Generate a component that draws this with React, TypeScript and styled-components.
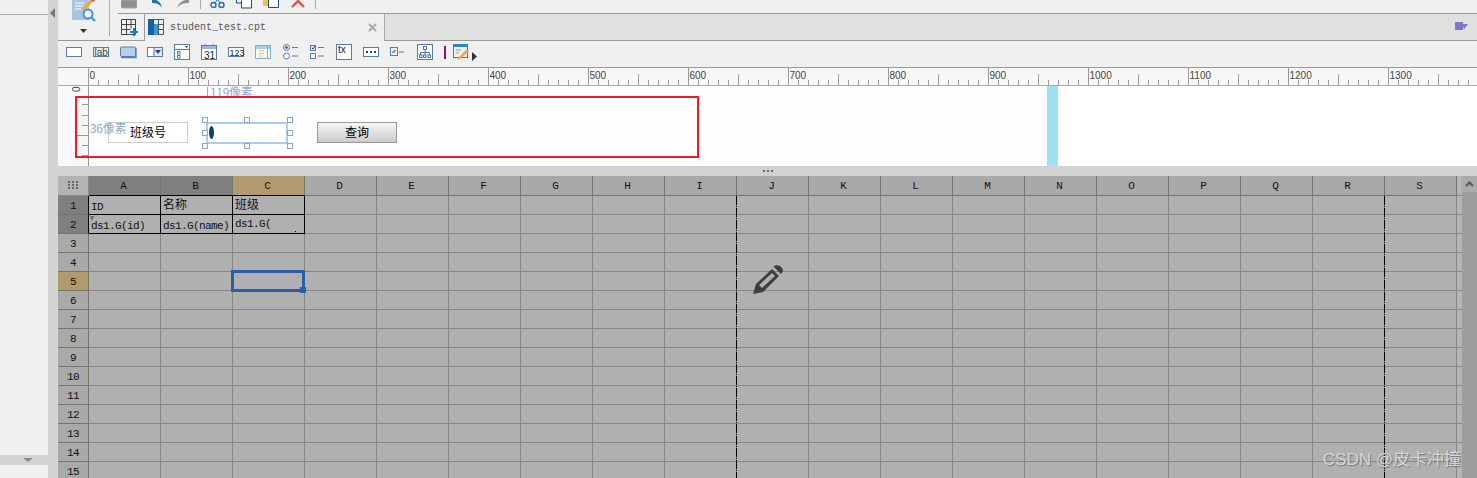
import React from "react";
import styled, { createGlobalStyle } from "styled-components";

const Global = createGlobalStyle`
  html, body { margin: 0; padding: 0; background: #f0f0f0; overflow: hidden; }
  * { box-sizing: border-box; }
  svg { display: block; }
`;

const MONO = `"Liberation Mono", "Noto Sans CJK SC", monospace`;
const CJK = `"Noto Sans CJK SC", "Liberation Sans", sans-serif`;
const ICON = "#5b7bab";

const Page = styled.div`
  position: relative;
  display: flex;
  width: 1477px;
  height: 478px;
  overflow: hidden;
  background: #f0f0f0;
`;

const Sidebar = styled.aside`
  width: 48px;
  display: flex;
  flex-direction: column;
  background: #f0f0f0;
`;
const SidebarHead = styled.div`
  height: 15px;
  border-bottom: 1px solid #aaa;
`;
const SidebarBody = styled.div`
  flex: 1;
`;
const SidebarBand = styled.div`
  height: 10px;
  margin-bottom: 13px;
  background: #d4d4d4;
  display: flex;
  align-items: center;
  justify-content: center;
  padding-left: 8px;
`;
const Collapse = styled.div`
  width: 10px;
  background: #d4d4d4;
  padding: 8px 0 0 2px;
`;
const Main = styled.main`
  flex: 1;
  min-width: 0;
  display: flex;
  flex-direction: column;
`;

const TopBlock = styled.div`
  display: flex;
  height: 41px;
`;
const LargeTool = styled.div`
  width: 60px;
  height: 41px;
  padding: 0 0 0 14px;
  border-bottom: 1px solid #999;
  position: relative;
  display: flex;
  flex-direction: column;
  gap: 6px;
`;
const LargeArrow = styled.div`
  margin-left: 8px;
`;
const LargeDivider = styled.div`
  position: absolute;
  left: 51px;
  top: 0;
  height: 36px;
  width: 1px;
  background: #aaa;
`;
const TopRight = styled.div`
  flex: 1;
  display: flex;
  flex-direction: column;
`;
const QuickBar = styled.div`
  height: 14px;
  border-bottom: 1px solid #999;
  display: flex;
  align-items: flex-start;
  padding-left: 3px;
`;
const QuickSlot = styled.div<{ $w: number }>`
  width: ${(p) => p.$w}px;
  height: 9px;
  overflow: hidden;
`;
const QuickDivider = styled.div<{ $after: number }>`
  width: 1px;
  height: 9px;
  background: #aaa;
  margin-right: ${(p) => p.$after}px;
`;
const TabRow = styled.div`
  display: flex;
  height: 27px;
`;
const NewSheet = styled.div`
  width: 27px;
  border-right: 1px solid #999;
  border-bottom: 1px solid #999;
  padding: 5px 0 0 3px;
`;
const Tab = styled.div`
  width: 240px;
  border-right: 1px solid #aaa;
  display: flex;
  align-items: center;
  padding: 0 7px 1px 3px;
  gap: 6px;
  background: #efefef;
`;
const TabName = styled.span`
  flex: 1;
  font: 10px ${MONO};
  color: #555;
`;
const TabFiller = styled.div`
  flex: 1;
  background: #e0e0e0;
  border-bottom: 1px solid #999;
  display: flex;
  align-items: center;
  justify-content: flex-end;
  padding: 0 9px 1px 0;
`;

const WidgetBar = styled.div`
  height: 27px;
  border-bottom: 1px solid #999;
  display: flex;
  padding: 2px 0 0 3px;
`;
const WidgetSlot = styled.div`
  width: 27px;
  height: 18px;
  display: flex;
  justify-content: center;
`;
const BarRule = styled.div`
  width: 2px;
  height: 13px;
  margin: 3px 7px 0 5px;
  background: #7a1a6e;
`;
const EditSlot = styled.div`
  display: flex;
  align-items: flex-start;
  gap: 3px;
`;
const EditArrow = styled.div`
  margin-top: 9px;
`;

const RulerRow = styled.div`
  height: 18px;
  background: #f7f7f7;
  border-bottom: 1px solid #aaa;
`;

const CanvasPane = styled.div`
  position: relative;
  height: 80px;
  display: flex;
`;
const Gutter = styled.div`
  width: 31px;
  background: #f9f9f9;
  border-right: 1px solid #999;
`;
const FormArea = styled.div`
  width: 958px;
  position: relative;
  background: #fdfdff;
`;
const BlueBar = styled.div`
  width: 11px;
  background: #9fe0f2;
`;
const CanvasRest = styled.div`
  flex: 1;
  background: #fff;
`;
const RedFrame = styled.div`
  position: absolute;
  left: 17px;
  top: 10px;
  width: 624px;
  height: 62px;
  border: 2px solid #ed1c24;
  pointer-events: none;
`;
const Measure = styled.span<{ $x: number; $y: number }>`
  position: absolute;
  left: ${(p) => p.$x}px;
  top: ${(p) => p.$y}px;
  font: 12px/14px ${CJK};
  letter-spacing: -0.3px;
  color: #93aac4;
  white-space: nowrap;
`;
const MeasureTick = styled.div`
  position: absolute;
  left: 118px;
  top: 1px;
  width: 1px;
  height: 10px;
  background: #93aac4;
`;
const LabelBox = styled.div`
  position: absolute;
  left: 19px;
  top: 36px;
  width: 80px;
  height: 21px;
  border: 1px solid #ccc;
  background: #fff;
  font: 12px/18px ${CJK};
  color: #000;
  text-align: center;
`;
const InputBox = styled.div`
  position: absolute;
  left: 117px;
  top: 36px;
  width: 82px;
  height: 22px;
  border: 2px solid #aecdea;
  background: #fff;
`;
const Caret = styled.div`
  position: absolute;
  left: 1px;
  top: 2px;
  width: 5px;
  height: 13px;
  border-radius: 50%;
  background: #0e3f70;
`;
const Handle = styled.div<{ $x: number; $y: number }>`
  position: absolute;
  left: ${(p) => p.$x}px;
  top: ${(p) => p.$y}px;
  width: 6px;
  height: 6px;
  border: 1px solid #8aa9c6;
  background: #fff;
`;
const QueryButton = styled.div`
  position: absolute;
  left: 228px;
  top: 36px;
  width: 80px;
  height: 21px;
  border: 1px solid #999;
  background: linear-gradient(#f6f6f6, #cbcbcb);
  font: 12px/18px ${CJK};
  color: #000;
  text-align: center;
`;

const HSplitter = styled.div`
  height: 10px;
  background: #d2d2d2;
  display: flex;
  align-items: center;
  justify-content: center;
  gap: 2px;
`;
const Dot = styled.i`
  width: 2px;
  height: 2px;
  background: #666;
`;

const SheetPane = styled.div`
  position: relative;
  flex: 1;
  min-height: 0;
  display: flex;
  overflow: hidden;
`;
const Sheet = styled.div`
  display: grid;
  grid-template-columns: 31px repeat(19, 72px) 5px;
  grid-auto-rows: 19px;
  grid-template-rows: 20px;
  background: #b0b0b0;
  width: 1404px;
`;
const Corner = styled.div`
  background: #b3b3b3;
  border-right: 1px solid #888;
  border-bottom: 1px solid #888;
  display: flex;
  align-items: center;
  justify-content: center;
`;
const ColHead = styled.div<{ $tone: "plain" | "dark" | "gold"; $boxed: boolean }>`
  background: ${(p) => (p.$tone === "gold" ? "#b29a6e" : p.$tone === "dark" ? "#7f7f7f" : "#a9a9a9")};
  border-right: 1px solid #75756a;
  border-bottom: 1px solid ${(p) => (p.$boxed ? "#000" : "#75756a")};
  font: 11px/21px ${MONO};
  color: #111;
  text-align: center;
  padding-right: 2px;
`;
const RowHead = styled.div<{ $tone: "plain" | "dark" | "gold"; $boxed: boolean }>`
  background: ${(p) => (p.$tone === "gold" ? "#b29a6e" : p.$tone === "dark" ? "#7f7f7f" : "#a9a9a9")};
  border-right: 1px solid ${(p) => (p.$boxed ? "#000" : "#75756a")};
  border-bottom: 1px solid #75756a;
  font: 11px/20px ${MONO};
  letter-spacing: -0.6px;
  color: #111;
  text-align: center;
`;
const Cell = styled.div<{ $boxed: boolean; $raised?: boolean }>`
  position: relative;
  border-right: 1px solid ${(p) => (p.$boxed ? "#000" : "#868686")};
  border-bottom: 1px solid ${(p) => (p.$boxed ? "#000" : "#868686")};
  font: 11px/18px ${MONO};
  letter-spacing: -0.6px;
  color: #111;
  padding: ${(p) => (p.$raised ? "0" : "2px")} 0 0 2px;
  white-space: nowrap;
  overflow: visible;
`;
const CjkText = styled.span`
  display: block;
  margin-top: -2px;
  font: 12px/16px ${CJK};
  letter-spacing: 0;
  color: #111;
`;
const EndCell = styled.div`
  background: #b5b5b5;
  border-bottom: 1px solid #868686;
`;
const CellMark = styled.div`
  position: absolute;
  left: 1px;
  top: 1px;
  width: 0;
  height: 0;
  border-left: 2px solid transparent;
  border-right: 2px solid transparent;
  border-top: 5px solid #666;
`;
const CellSpeck = styled.div`
  position: absolute;
  right: 8px;
  bottom: 1px;
  width: 1px;
  height: 1px;
  background: #000;
`;
const Selection = styled.div`
  position: absolute;
  left: -2px;
  top: -2px;
  width: 74px;
  height: 22px;
  border: 3px solid #2a5fa8;
  z-index: 3;
`;
const SelectionGrip = styled.div`
  position: absolute;
  right: -4px;
  bottom: -4px;
  width: 6px;
  height: 6px;
  background: #2a5fa8;
`;
const PageBreak = styled.div<{ $x: number }>`
  position: absolute;
  left: ${(p) => p.$x}px;
  top: 20px;
  bottom: 0;
  width: 1px;
  z-index: 2;
  background: repeating-linear-gradient(#000 0 9px, transparent 9px 10px, #000 10px 11px, transparent 11px 12px);
`;
const ScrollBar = styled.div`
  width: 15px;
  background: #9d9d9d;
`;
const ScrollUp = styled.div`
  height: 16px;
  background: #ababab;
  display: flex;
  align-items: center;
  justify-content: center;
`;
const PencilMark = styled.div`
  position: absolute;
  left: 695px;
  top: 88px;
  width: 32px;
  height: 32px;
  z-index: 4;
`;
const Watermark = styled.div`
  position: absolute;
  right: 16px;
  bottom: 9px;
  font: 17px/19px "Liberation Sans", "Noto Sans CJK SC", sans-serif;
  color: #d6d6d6;
  text-shadow: 1px 1px 1px #777;
  white-space: nowrap;
  z-index: 5;
`;
const SvgText = styled.text`
  font-family: "Liberation Sans", sans-serif;
`;

const Ruler = () => {
  const ticks: React.ReactNode[] = [];
  for (let v = 0; v <= 1390; v += 10) {
    const x = 30.5 + v;
    const h = v % 100 === 0 ? 17 : v % 50 === 0 ? 11 : 5;
    ticks.push(<line key={v} x1={x} x2={x} y1={17 - h} y2={17} stroke="#9a9a9a" />);
    if (v % 100 === 0)
      ticks.push(
        <SvgText key={`t${v}`} x={x + 1} y={11} fontSize={10} fill="#444">
          {v}
        </SvgText>
      );
  }
  return <svg width={1419} height={17}>{ticks}</svg>;
};

const VRuler = () => (
  <svg width={30} height={80}>
    <rect x={14} width={16} height={80} fill="#f7f7f7" />
    {[18, 29, 39, 59, 69].map((y) => (
      <line key={y} x1={24} x2={30} y1={y + 0.5} y2={y + 0.5} stroke="#999" />
    ))}
    <line x1={17} x2={30} y1={49.5} y2={49.5} stroke="#999" />
    <SvgText x={-6} y={22} fontSize={10} fill="#444" transform="rotate(-90)">
      0
    </SvgText>
  </svg>
);

const LargeIcon = () => (
  <svg width={26} height={23} viewBox="0 0 26 23">
    <path d="M0 0h17v20H1a1 1 0 0 1-1-1z" fill="#a9c4e0" />
    <path d="M3 3h9M3 6h8M3 9h6" stroke="#fff" strokeWidth={1} />
    <path d="M10 9 18 0h4l-9 11z" fill="#f2a53a" />
    <path d="M19 0h4l-2 2z" fill="#d9534f" />
    <circle cx={16} cy={14} r={4.5} fill="#e8f3fb" stroke="#3f97e0" strokeWidth={2} />
    <path d="m19 17 4 4" stroke="#3f97e0" strokeWidth={2.4} />
  </svg>
);
const Down = ({ fill = "#333", w = 7 }: { fill?: string; w?: number }) => (
  <svg width={w} height={4} viewBox="0 0 7 4" preserveAspectRatio="none">
    <path d="M0 0h7L3.5 4z" fill={fill} />
  </svg>
);

const Quick = {
  Save: () => (
    <svg width={16} height={9}>
      <path d="M0 0h16v7a1 1 0 0 1-1 1H1a1 1 0 0 1-1-1z" fill="#8f8f8f" stroke="#aaa" />
    </svg>
  ),
  Undo: () => (
    <svg width={14} height={9}>
      <path d="M2 0c5-1 9 2 10 8C10 4 6 3 2 3z" fill="#1f6fb8" />
    </svg>
  ),
  Redo: () => (
    <svg width={16} height={9}>
      <path d="M14 0C9-1 4 2 2 8c3-4 7-5 12-5z" fill="#8f8f8f" />
    </svg>
  ),
  Cut: () => (
    <svg width={15} height={9}>
      <circle cx={3.5} cy={5} r={2.5} fill="none" stroke="#1f6fb8" strokeWidth={1.4} />
      <circle cx={11.5} cy={5} r={2.5} fill="none" stroke="#1f6fb8" strokeWidth={1.4} />
      <path d="M5 3 7 0M10 3 8 0" stroke="#1f6fb8" />
    </svg>
  ),
  Copy: () => (
    <svg width={17} height={9}>
      <path d="M0.5 0v3h5" fill="none" stroke="#1d4c6e" />
      <path d="M5.5 0.5v7.5h10V0" fill="#fff" stroke="#1d4c6e" />
    </svg>
  ),
  Paste: () => (
    <svg width={17} height={9}>
      <rect width={6} height={6} fill="#f5c251" />
      <path d="M5.5 0v7.5h10V0" fill="#fff" stroke="#1d4c6e" />
    </svg>
  ),
  Del: () => (
    <svg width={15} height={9}>
      <path d="m1 7 6-6 6 6" fill="none" stroke="#e84a4a" strokeWidth={2.4} />
    </svg>
  ),
};

const W = ({ children }: { children: React.ReactNode }) => (
  <svg width={17} height={18} viewBox="0 0 17 18" fill="none">
    {children}
  </svg>
);
const widgets: React.ReactNode[] = [
  <W><rect x=".5" y="4.5" width="15" height="9" fill="#fff" stroke={ICON} /></W>,
  <W>
    <rect x=".5" y="4.5" width="15" height="9" stroke={ICON} />
    <SvgText x="1.5" y="12.5" fontSize="10" fill="#444">lab</SvgText>
  </W>,
  <W>
    <path d="M1 14.5h15V5" stroke={ICON} strokeWidth="1.4" />
    <rect x=".5" y="4" width="15" height="9.5" rx="1" fill="#b6d0ea" stroke={ICON} />
  </W>,
  <W>
    <rect x=".5" y="4.5" width="15" height="9" fill="#fff" stroke={ICON} />
    <rect x="7" y="5" width="8" height="8" fill="#dfe7f2" />
    <path d="M8 7h6l-3 4z" fill="#25457a" />
    <path d="M7 5v8" stroke={ICON} />
  </W>,
  <W>
    <rect x=".5" y="1.5" width="15" height="15" fill="#fbfbfb" stroke={ICON} />
    <path d="M1 6.5h15" stroke={ICON} />
    <path d="M11 3h3l-1.5 2z" fill="#25457a" />
    <rect x="3.5" y="8.5" width="2.5" height="2.5" stroke={ICON} />
    <rect x="3.5" y="12.5" width="2.5" height="2.5" stroke={ICON} />
  </W>,
  <W>
    <rect x=".5" y="2.5" width="15" height="14" fill="#fff" stroke={ICON} />
    <rect x="1" y="3" width="14" height="3" fill="#9db8d8" />
    <path d="M4 1v2M12 1v2" stroke={ICON} />
    <SvgText x="3" y="15.5" fontSize="10" fill="#222">31</SvgText>
  </W>,
  <W>
    <rect x=".5" y="4.5" width="15" height="9" stroke={ICON} fill="#fff" />
    <SvgText x="1.6" y="12.5" fontSize="9" fill="#223">123</SvgText>
  </W>,
  <W>
    <rect x=".5" y="2.5" width="15" height="13" fill="#fbf8ef" stroke="#7fb0d2" />
    <rect x="1" y="3" width="14" height="3" fill="#a9cfe6" />
    <path d="M12.5 3v12" stroke="#7fb0d2" />
    <path d="M4 8h6M4 10.5h6M4 13h4" stroke="#eab36a" strokeDasharray="2 1" />
  </W>,
  <W>
    <circle cx="4.5" cy="4.5" r="3" stroke={ICON} fill="#dfe7f2" />
    <circle cx="4.5" cy="4.5" r="1.2" fill="#25457a" />
    <circle cx="4.5" cy="13" r="3" stroke={ICON} fill="#fff" />
    <path d="M10 4.5h6M10 13h6" stroke={ICON} />
  </W>,
  <W>
    <rect x="1.5" y="2.5" width="5" height="5" stroke={ICON} fill="#dfe7f2" />
    <path d="M3 5 4 6l2-3" stroke="#25457a" />
    <rect x="1.5" y="10.5" width="5" height="5" stroke={ICON} fill="#fff" />
    <path d="M9 4.5h6M9 13h6" stroke={ICON} />
  </W>,
  <W>
    <rect x=".5" y="1.5" width="15" height="15" fill="#fff" stroke={ICON} />
    <SvgText x="2" y="10" fontSize="10" fill="#222">tx</SvgText>
  </W>,
  <W>
    <rect x=".5" y="4.5" width="15" height="9" fill="#fff" stroke={ICON} />
    <path d="M3 9h2M7 9h2M11 9h2" stroke="#25457a" strokeWidth="2" />
  </W>,
  <W>
    <rect x=".5" y="4.5" width="7" height="8" fill="#eef2f8" stroke={ICON} />
    <path d="m2.5 10 3-3" stroke={ICON} strokeWidth="1.4" />
    <path d="M9 9h5" stroke={ICON} />
  </W>,
  <W>
    <rect x=".5" y="1.5" width="15" height="15" fill="#fbfbfb" stroke={ICON} />
    <rect x="6.5" y="3.5" width="3" height="3" stroke={ICON} />
    <path d="M8 6.5V9M3.5 12V9.5h9V12M8 9.5V12" stroke={ICON} />
    <rect x="2.5" y="12" width="2.5" height="2.5" stroke={ICON} />
    <rect x="6.5" y="12" width="2.5" height="2.5" stroke={ICON} />
    <rect x="11" y="12" width="2.5" height="2.5" stroke={ICON} />
  </W>,
];

const cols = "ABCDEFGHIJKLMNOPQRS".split("");
const rows = Array.from({ length: 15 }, (_, i) => i + 1);
const tone = (dark: boolean, gold: boolean) => (gold ? "gold" : dark ? "dark" : "plain") as "plain" | "dark" | "gold";
const contents: Record<string, React.ReactNode> = {
  A1: "ID",
  B1: <CjkText>名称</CjkText>,
  C1: <CjkText>班级</CjkText>,
  A2: <>ds1.G(id)<CellMark /></>,
  B2: "ds1.G(name)",
  C2: <>ds1.G(<CellSpeck /></>,
};

const handles: [number, number][] = [
  [113, 31], [155, 31], [198, 31],
  [113, 44], [198, 44],
  [113, 57], [155, 57], [198, 57],
];

export default function App() {
  return (
    <Page>
      <Global />
      <Sidebar>
        <SidebarHead />
        <SidebarBody />
        <SidebarBand><Down fill="#8a8a8a" w={10} /></SidebarBand>
      </Sidebar>
      <Collapse>
        <svg width={6} height={10}>
          <path d="M5 0v10L0 5z" fill="#777" />
        </svg>
      </Collapse>
      <Main>
        <TopBlock>
          <LargeTool>
            <LargeIcon />
            <LargeArrow><Down /></LargeArrow>
            <LargeDivider />
          </LargeTool>
          <TopRight>
            <QuickBar>
              <QuickSlot $w={29}><Quick.Save /></QuickSlot>
              <QuickSlot $w={25}><Quick.Undo /></QuickSlot>
              <QuickSlot $w={25}><Quick.Redo /></QuickSlot>
              <QuickDivider $after={9} />
              <QuickSlot $w={26}><Quick.Cut /></QuickSlot>
              <QuickSlot $w={27}><Quick.Copy /></QuickSlot>
              <QuickSlot $w={28}><Quick.Paste /></QuickSlot>
              <QuickSlot $w={24}><Quick.Del /></QuickSlot>
              <QuickDivider $after={0} />
            </QuickBar>
            <TabRow>
              <NewSheet>
                <svg width={18} height={17} fill="none">
                  <path d="M.5.5h14v15H.5zM5.5.5v15M10 .5v9M.5 5.5h14M.5 10.5h9" stroke="#444" />
                  <path d="M13 9v8M9 13h8" stroke="#1f7fc4" strokeWidth="2.2" />
                </svg>
              </NewSheet>
              <Tab>
                <svg width={16} height={16} fill="none">
                  <path d="M.5.5h15v15H.5zM5.5.5v15M10.5.5v15M.5 5.5h15M.5 10.5h15" stroke="#555" />
                  <path d="M0 0h6v5h4v11H6V10H5v6H0z" fill="#1d5f9e" />
                  <path d="M6 5h4v11H6z" fill="#27a0dc" />
                </svg>
                <TabName>student_test.cpt</TabName>
                <svg width={9} height={9}>
                  <path d="m1 1 7 7M8 1 1 8" stroke="#aaa" strokeWidth="2" />
                </svg>
              </Tab>
              <TabFiller>
                <svg width={13} height={10}>
                  <path d="M0 0h8v2H13L9.5 7 8 5v3H0z" fill="#7a7ac8" />
                </svg>
              </TabFiller>
            </TabRow>
          </TopRight>
        </TopBlock>

        <WidgetBar>
          {widgets.map((w, i) => (
            <WidgetSlot key={i}>{w}</WidgetSlot>
          ))}
          <BarRule />
          <EditSlot>
            <svg width={16} height={18} fill="none">
              <rect x=".5" y="1.5" width="14" height="13" fill="#eee" stroke="#2e8ab8" />
              <rect x="1" y="2" width="13" height="2" fill="#2e8ab8" />
              <path d="M3 7h5M3 10h3" stroke="#999" />
              <path d="m5 15 8-8 2 2-8 7-3 1z" fill="#f2a53a" />
              <path d="m13 7 1-1 2 2-1 1z" fill="#d98ac0" />
            </svg>
            <EditArrow>
              <svg width={5} height={9}>
                <path d="M0 0v9l5-4.5z" fill="#333" />
              </svg>
            </EditArrow>
          </EditSlot>
        </WidgetBar>

        <RulerRow><Ruler /></RulerRow>

        <CanvasPane>
          <Gutter><VRuler /></Gutter>
          <FormArea>
            <MeasureTick />
            <Measure $x={121} $y={-1}>119像素</Measure>
            <LabelBox>班级号</LabelBox>
            <Measure $x={1} $y={35}>36像素</Measure>
            <InputBox><Caret /></InputBox>
            {handles.map(([x, y]) => (
              <Handle key={`${x}-${y}`} $x={x} $y={y} />
            ))}
            <QueryButton>查询</QueryButton>
          </FormArea>
          <BlueBar />
          <CanvasRest />
          <RedFrame />
        </CanvasPane>

        <HSplitter><Dot /><Dot /><Dot /></HSplitter>

        <SheetPane>
          <Sheet>
            <Corner>
              <svg width={11} height={9}>
                {[0, 4, 8].flatMap((x) =>
                  [0, 3, 6].map((y) => <rect key={`${x}${y}`} x={x} y={y} width={2} height={2} fill="#666" />)
                )}
              </svg>
            </Corner>
            {cols.map((c, i) => (
              <ColHead key={c} $tone={tone(i < 2, i === 2)} $boxed={i < 3}>{c}</ColHead>
            ))}
            <EndCell />
            {rows.map((r) => (
              <React.Fragment key={r}>
                <RowHead $tone={tone(r < 3, r === 5)} $boxed={r < 3}>{r}</RowHead>
                {cols.map((c, i) => {
                  const key = `${c}${r}`;
                  return (
                    <Cell key={key} $boxed={i < 3 && r < 3} $raised={key === "C2"}>
                      {contents[key]}
                      {key === "C5" && (
                        <Selection><SelectionGrip /></Selection>
                      )}
                    </Cell>
                  );
                })}
                <EndCell />
              </React.Fragment>
            ))}
          </Sheet>
          <ScrollBar>
            <ScrollUp>
              <svg width={9} height={6}>
                <path d="m1 5 3.5-3.5L8 5" fill="none" stroke="#555" strokeWidth="2" />
              </svg>
            </ScrollUp>
          </ScrollBar>
          <PageBreak $x={678} />
          <PageBreak $x={1326} />
          <PencilMark>
            <svg width={32} height={32}>
              <path d="M0 30 3 20 19 5 26 12 10 28z" fill="#3d3d3d" />
              <path d="M6 21 19 9l3 3L9 24z" fill="#b0b0b0" />
              <path d="M20.5 2.5a6 6 0 0 1 9.5 5L28 10z" fill="#3d3d3d" />
            </svg>
          </PencilMark>
          <Watermark>CSDN @皮卡冲撞</Watermark>
        </SheetPane>
      </Main>
    </Page>
  );
}
